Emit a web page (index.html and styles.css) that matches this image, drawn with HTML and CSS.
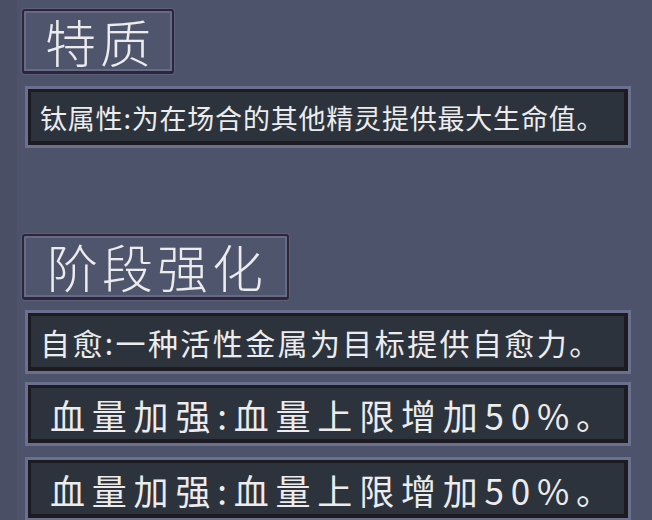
FILE: index.html
```html
<!DOCTYPE html>
<html lang="zh-CN">
<head>
    <meta charset="UTF-8">
    <meta name="viewport" content="width=device-width, initial-scale=1.0">
    <title>精灵详情</title>
    <link rel="stylesheet" href="styles.css">
</head>
<body>
    <div class="panel">
        <div class="tag tag-first">特质</div>
        <div class="entry entry-trait">钛属性:为在场合的其他精灵提供最大生命值。</div>

        <div class="tag tag-second">阶段强化</div>
        <div class="entry entry-heal">自愈:一种活性金属为目标提供自愈力。</div>
        <div class="entry entry-hp">血量加强:血量上限增加50%。</div>
        <div class="entry entry-hp entry-last">血量加强:血量上限增加50%。</div>
    </div>
</body>
</html>
```

FILE: styles.css
```css
* {
    margin: 0;
    padding: 0;
    box-sizing: border-box;
}

body {
    width: 652px;
    height: 520px;
    overflow: hidden;
    background: linear-gradient(to right, #4a4f65 17px, #4d536a 17px);
    font-family: "Noto Sans CJK SC", "Noto Sans", sans-serif;
    color: #ececec;
}

.panel {
    display: flex;
    flex-direction: column;
    align-items: flex-start;
    padding: 9px 21px 0 25px;
}

/* section headings */
.tag {
    display: flex;
    align-items: center;
    height: 65px;
    margin-left: -3px;
    padding: 0 17px 0 21px;
    background-color: #4f556d;
    border: 2px solid #2f2438;
    border-bottom-width: 3px;
    border-radius: 3px;
    box-shadow: inset 0 0 0 2px #656b87, 0 0 0 1px #5a5f7a;
    font-size: 51px;
    font-weight: 300;
    letter-spacing: 4px;
    line-height: 1;
}

.tag-second {
    margin-top: 86px;
    height: 66px;
    padding-left: 23px;
    padding-right: 20px;
}

/* description rows */
.entry {
    display: flex;
    align-items: center;
    width: 100%;
    height: 64px;
    margin-top: 10px;
    padding-left: 12px;
    background-color: #2d333d;
    border: 3px solid #6a7190;
    box-shadow: inset 0 0 0 3px #1d1b20, inset -1px -1px 0 3px #1d1b20;
    line-height: 1;
    white-space: nowrap;
}

.entry-trait {
    height: 62px;
    margin-top: 12px;
    font-size: 27px;
    letter-spacing: 0.8px;
}

.entry-heal {
    font-size: 30px;
    letter-spacing: 2.4px;
}

.entry-hp {
    margin-top: 8px;
    padding-left: 22px;
    font-size: 35px;
    letter-spacing: 6.8px;
}

.entry-last {
    margin-top: 11px;
}
```
